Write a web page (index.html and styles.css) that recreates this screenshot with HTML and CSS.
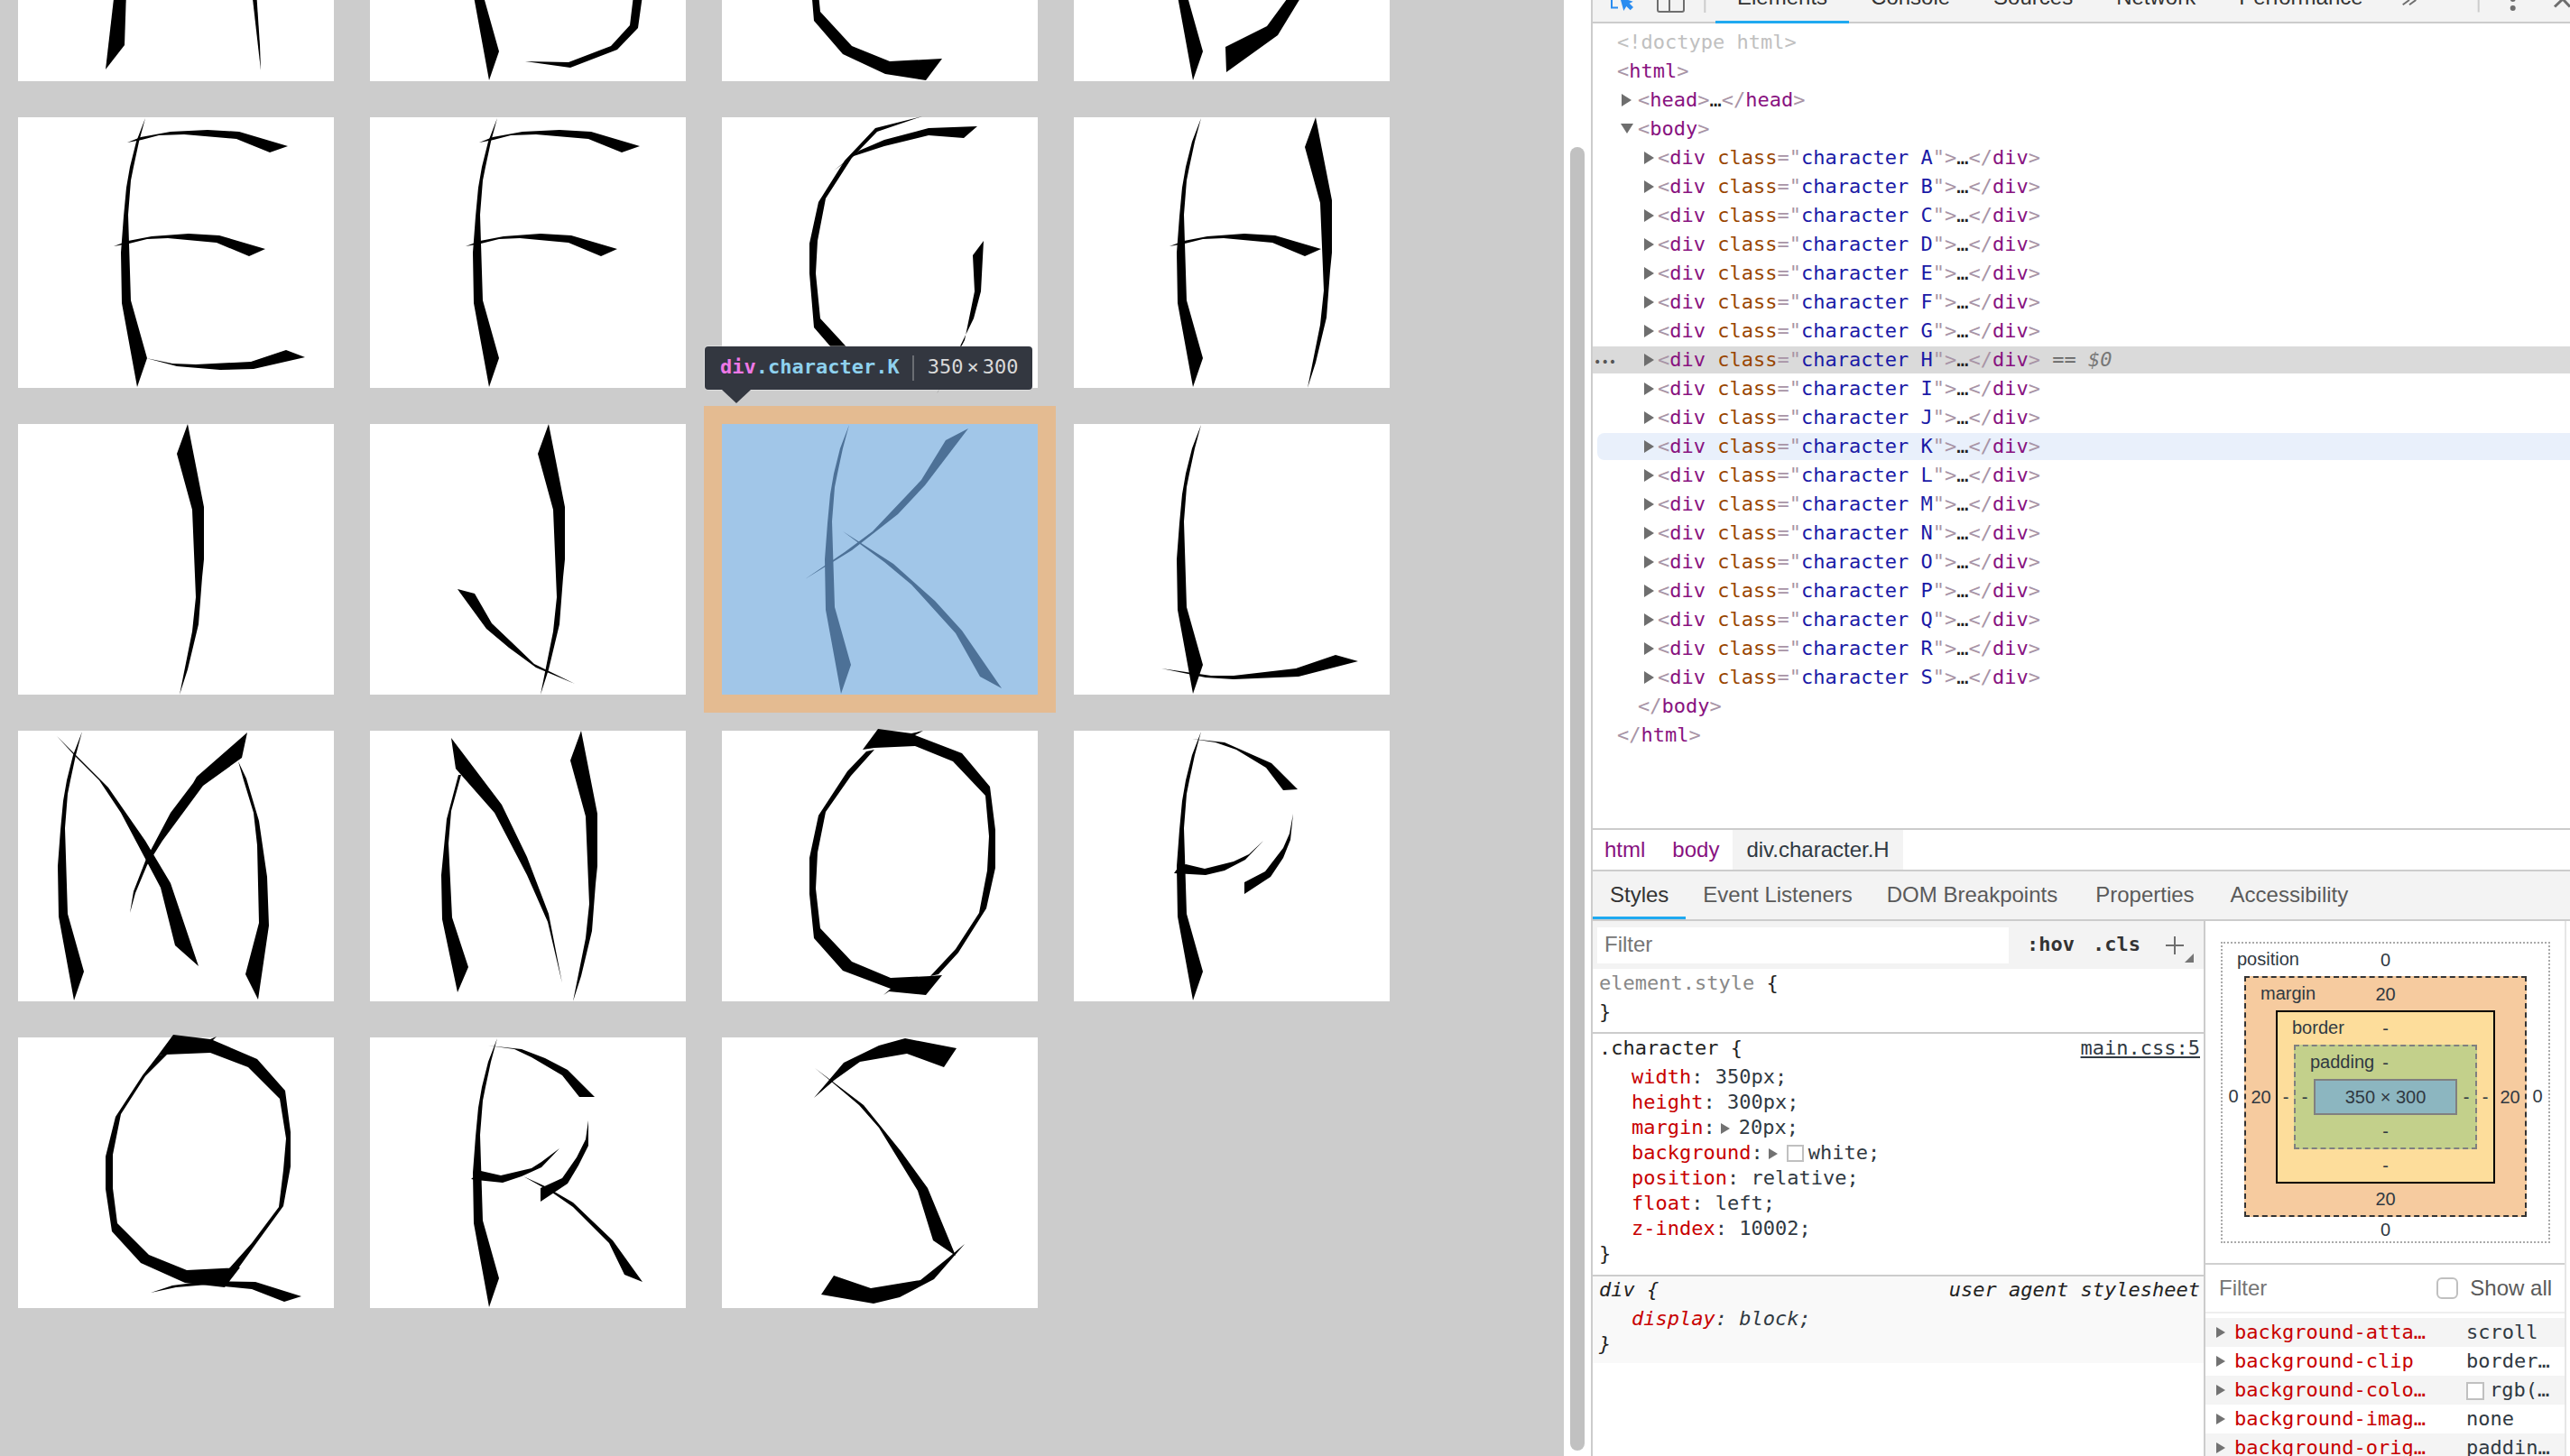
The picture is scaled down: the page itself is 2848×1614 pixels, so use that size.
FILE: index.html
```html
<!DOCTYPE html>
<html lang="en">
<head>
    <meta charset="UTF-8">
    <title>Characters</title>
    <link rel="stylesheet" href="styles.css">
</head>
<body>
    <!-- strokes that several letters share -->
    <svg class="defs">
        <defs>
            <polygon id="stem" points="141,1 134,27 128,55 125,70 122,108 125,203 143,267 132,299 115,206 114,150 117,110 120,78 124,55 131,27"/>
            <polygon id="tall" points="188,0 176,33 193,95 197,192 193,230 185,270 179,300 188,272 200,222 204,170 206,150 206,92"/>
            <polygon id="bar-top" points="121,28 136,22 169,16 210,14 245,16 299,32 279,39 242,24 184,19 156,20 137,25"/>
            <polygon id="bar-mid" points="106,143 122,137 148,132 189,129 223,131 274,146 256,154 220,139 166,134 143,135 123,140"/>
            <polygon id="curve" points="222,-1 170,12 136,48 107,94 97,140 97,173 102,233 134,270 181,292 226,299 244,275 186,278 144,261 109,223 104,173 106,137 115,90 144,45 172,16"/>
        </defs>
    </svg>

    <div class="page">
        <div class="sheet">
            <div class="character A"><svg class="glyph" viewBox="0 0 350 300">
                <polygon points="107,200 97,287 118,260 120,200"/>
                <polygon points="259,200 269,288 268,260 264,200"/>
            </svg></div>
            <div class="character B"><svg class="glyph" viewBox="0 0 350 300">
                <use href="#stem"/>
                <polygon points="172,278 220,279 267,261 288,238 292,205 302,205 297,241 274,265 222,285"/>
            </svg></div>
            <div class="character C"><svg class="glyph" viewBox="0 0 350 300">
                <use href="#curve"/>
            </svg></div>
            <div class="character D"><svg class="glyph" viewBox="0 0 350 300">
                <use href="#stem"/>
                <polygon points="168,262 214,239 250,190 262,190 226,249 169,290"/>
            </svg></div>

            <div class="character E"><svg class="glyph" viewBox="0 0 350 300">
                <use href="#stem"/>
                <use href="#bar-top"/>
                <use href="#bar-mid"/>
                <polygon points="142,267 171,273 197,274 258,271 297,258 318,266 261,279 224,280 176,276"/>
            </svg></div>
            <div class="character F"><svg class="glyph" viewBox="0 0 350 300">
                <use href="#stem"/>
                <use href="#bar-top"/>
                <use href="#bar-mid"/>
            </svg></div>
            <div class="character G"><svg class="glyph" viewBox="0 0 350 300">
                <use href="#curve"/>
                <polygon points="124,59 152,37 180,25 229,12 283,10 268,23 229,20 180,32 146,43"/>
                <polygon points="290,137 278,153 280,193 269,247 238,307 279,223 287,193"/>
            </svg></div>
            <div class="character H"><svg class="glyph" viewBox="0 0 350 300">
                <use href="#stem"/>
                <use href="#tall" x="80"/>
                <use href="#bar-mid"/>
            </svg></div>

            <div class="character I"><svg class="glyph" viewBox="0 0 350 300">
                <use href="#tall"/>
            </svg></div>
            <div class="character J"><svg class="glyph" viewBox="0 0 350 300">
                <use href="#tall" x="10"/>
                <polygon points="97,183 116,188 135,221 156,241 182,266 227,288 184,270 154,248 129,227"/>
            </svg></div>
            <div class="character K"><svg class="glyph" viewBox="0 0 350 300">
                <use href="#stem"/>
                <polygon points="92,172 144,140 195,100 225,68 273,5 248,18 221,62 167,119 136,142"/>
                <polygon points="134,119 190,155 236,196 266,229 310,293 286,280 259,232 210,178 180,153"/>
            </svg></div>
            <div class="character L"><svg class="glyph" viewBox="0 0 350 300">
                <use href="#stem"/>
                <polygon points="97,271 152,279 177,279 246,271 290,256 315,263 249,280 177,283 146,281"/>
            </svg></div>

            <div class="character M"><svg class="glyph" viewBox="0 0 350 300">
                <use href="#stem" x="-70"/>
                <polygon points="43,6 100,63 141,122 169,169 200,261 174,238 158,174 114,91 90,55 64,29"/>
                <polygon points="254,2 248,30 205,61 160,122 143,149 130,180 124,202 128,178 142,142 169,91 194,58 198,51"/>
                <polygon points="244,34 253,53 267,100 276,162 278,216 266,298 252,270 267,213 265,127 261,91 250,55"/>
            </svg></div>
            <div class="character N"><svg class="glyph" viewBox="0 0 350 300">
                <polygon points="101,49 90,89 87,125 91,207 109,262 97,290 80,209 79,160 85,98 98,49"/>
                <polygon points="90,8 146,82 174,140 198,203 213,280 197,212 174,160 138,91 95,42"/>
                <use href="#tall" x="46"/>
            </svg></div>
            <div class="character O"><svg class="glyph" viewBox="0 0 350 300">
                <polygon points="173,-2 210,3 223,0 214,5 266,25 297,62 303,110 303,152 293,197 262,246 240,270 231,272 259,242 285,202 294,155 296,117 292,72 256,34 214,17 169,19 156,21"/>
                <polygon points="226,293 185,289 179,293 187,286 134,266 102,230 97,181 97,141 107,94 139,45 160,23 169,21 143,50 115,90 106,135 104,175 109,219 144,256 187,274 231,272 244,271"/>
            </svg></div>
            <div class="character P"><svg class="glyph" viewBox="0 0 350 300">
                <use href="#stem"/>
                <polygon points="131,9 167,13 219,36 248,65 232,66 213,41 180,21 157,13"/>
                <polygon points="111,158 116,151 124,148 145,153 177,145 194,137 210,122 190,143 167,155 146,160"/>
                <polygon points="243,92 240,121 232,141 218,162 189,181 189,168 212,156 232,130 239,114"/>
            </svg></div>

            <div class="character Q"><svg class="glyph" viewBox="0 0 350 300">
                <polygon points="172,-3 213,2 220,-1 216,3 265,24 296,59 302,105 302,143 294,187 262,231 244,256 233,257 259,228 289,188 294,147 297,112 290,68 255,33 213,17 164,19 155,20"/>
                <polygon points="246,255 187,258 145,241 110,206 105,167 105,130 114,85 141,43 166,18 155,20 138,42 108,88 97,132 97,168 104,215 136,250 185,272 229,277"/>
                <polygon points="147,283 171,275 210,270 263,271 314,287 295,293 259,279 210,274 175,277"/>
            </svg></div>
            <div class="character R"><svg class="glyph" viewBox="0 0 350 300">
                <use href="#stem"/>
                <polygon points="131,9 168,13 194,23 219,36 249,66 232,66 213,42 179,22 160,13"/>
                <polygon points="112,157 123,148 145,153 179,145 190,138 210,123 190,144 168,154 147,161 118,158"/>
                <polygon points="242,92 242,120 231,142 219,162 189,182 189,167 213,156 229,133 239,113"/>
                <polygon points="170,154 194,165 225,183 269,225 302,271 282,263 265,228 225,188 202,172"/>
            </svg></div>
            <div class="character S"><svg class="glyph" viewBox="0 0 350 300">
                <polygon points="102,67 135,28 174,9 203,1 260,12 246,33 205,18 153,27 125,47"/>
                <polygon points="103,34 157,75 199,127 228,167 259,242 234,225 217,170 174,100 152,75 119,47"/>
                <polygon points="269,229 235,268 197,288 168,295 110,285 124,264 165,278 220,269 250,245"/>
            </svg></div>
        </div>

        <div class="tooltip">
            <span class="tip-tag">div</span><span class="tip-class">.character.K</span>
            <span class="tip-sep"></span>
            <span class="tip-size">350<i>×</i>300</span>
        </div>
    </div>

    <div class="page-scroll"><div class="page-thumb"></div></div>

    <div class="devtools">
        <div class="toolbar">
            <svg class="tool-icons" viewBox="0 0 136 26">
                <path class="ico-blue" d="M21 0v8.5h7"/>
                <path class="ico-blue-fill" d="M31 0l3.3 12 3-5 4.4 4.3 3.3-3.3-4.3-4.3 4-2L39.3 0z"/>
                <path class="ico-gray" d="M72 0v11a2 2 0 0 0 2 2h25a2 2 0 0 0 2-2V0M85 0v13"/>
                <path class="ico-sep" d="M124.3 0v14"/>
            </svg>
            <div class="tool-tab tool-active">Elements</div>
            <div class="tool-tab">Console</div>
            <div class="tool-tab">Sources</div>
            <div class="tool-tab">Network</div>
            <div class="tool-tab">Performance</div>
            <svg class="tool-end" viewBox="0 0 198 26">
                <path class="ico-gray" d="M12.7 5.3L20 0M20 5.3L27.3 0"/>
                <path class="ico-sep" d="M96.7 0v13.5"/>
                <circle class="ico-dot" cx="134.7" cy="-1" r="3"/>
                <circle class="ico-dot" cx="134.7" cy="9" r="3"/>
                <path class="ico-gray ico-thick" d="M181 7.5L190 -1L198 7.5"/>
            </svg>
        </div>

        <div class="tree">
            <div class="row lvl0 doctype">&lt;!doctype html&gt;</div>
            <div class="row lvl0"><b>&lt;</b><em>html</em><b>&gt;</b></div>
            <div class="row lvl1 closed"><b>&lt;</b><em>head</em><b>&gt;</b>…<b>&lt;/</b><em>head</em><b>&gt;</b></div>
            <div class="row lvl1 open"><b>&lt;</b><em>body</em><b>&gt;</b></div>
            <div class="row lvl2 closed"><b>&lt;</b><em>div</em> <u>class</u><b>="</b><s>character A</s><b>"&gt;</b>…<b>&lt;/</b><em>div</em><b>&gt;</b></div>
            <div class="row lvl2 closed"><b>&lt;</b><em>div</em> <u>class</u><b>="</b><s>character B</s><b>"&gt;</b>…<b>&lt;/</b><em>div</em><b>&gt;</b></div>
            <div class="row lvl2 closed"><b>&lt;</b><em>div</em> <u>class</u><b>="</b><s>character C</s><b>"&gt;</b>…<b>&lt;/</b><em>div</em><b>&gt;</b></div>
            <div class="row lvl2 closed"><b>&lt;</b><em>div</em> <u>class</u><b>="</b><s>character D</s><b>"&gt;</b>…<b>&lt;/</b><em>div</em><b>&gt;</b></div>
            <div class="row lvl2 closed"><b>&lt;</b><em>div</em> <u>class</u><b>="</b><s>character E</s><b>"&gt;</b>…<b>&lt;/</b><em>div</em><b>&gt;</b></div>
            <div class="row lvl2 closed"><b>&lt;</b><em>div</em> <u>class</u><b>="</b><s>character F</s><b>"&gt;</b>…<b>&lt;/</b><em>div</em><b>&gt;</b></div>
            <div class="row lvl2 closed"><b>&lt;</b><em>div</em> <u>class</u><b>="</b><s>character G</s><b>"&gt;</b>…<b>&lt;/</b><em>div</em><b>&gt;</b></div>
            <div class="row lvl2 closed selected"><span class="row-dots">•••</span><b>&lt;</b><em>div</em> <u>class</u><b>="</b><s>character H</s><b>"&gt;</b>…<b>&lt;/</b><em>div</em><b>&gt;</b><span class="row-eq"> == <i>$0</i></span></div>
            <div class="row lvl2 closed"><b>&lt;</b><em>div</em> <u>class</u><b>="</b><s>character I</s><b>"&gt;</b>…<b>&lt;/</b><em>div</em><b>&gt;</b></div>
            <div class="row lvl2 closed"><b>&lt;</b><em>div</em> <u>class</u><b>="</b><s>character J</s><b>"&gt;</b>…<b>&lt;/</b><em>div</em><b>&gt;</b></div>
            <div class="row lvl2 closed hovered"><b>&lt;</b><em>div</em> <u>class</u><b>="</b><s>character K</s><b>"&gt;</b>…<b>&lt;/</b><em>div</em><b>&gt;</b></div>
            <div class="row lvl2 closed"><b>&lt;</b><em>div</em> <u>class</u><b>="</b><s>character L</s><b>"&gt;</b>…<b>&lt;/</b><em>div</em><b>&gt;</b></div>
            <div class="row lvl2 closed"><b>&lt;</b><em>div</em> <u>class</u><b>="</b><s>character M</s><b>"&gt;</b>…<b>&lt;/</b><em>div</em><b>&gt;</b></div>
            <div class="row lvl2 closed"><b>&lt;</b><em>div</em> <u>class</u><b>="</b><s>character N</s><b>"&gt;</b>…<b>&lt;/</b><em>div</em><b>&gt;</b></div>
            <div class="row lvl2 closed"><b>&lt;</b><em>div</em> <u>class</u><b>="</b><s>character O</s><b>"&gt;</b>…<b>&lt;/</b><em>div</em><b>&gt;</b></div>
            <div class="row lvl2 closed"><b>&lt;</b><em>div</em> <u>class</u><b>="</b><s>character P</s><b>"&gt;</b>…<b>&lt;/</b><em>div</em><b>&gt;</b></div>
            <div class="row lvl2 closed"><b>&lt;</b><em>div</em> <u>class</u><b>="</b><s>character Q</s><b>"&gt;</b>…<b>&lt;/</b><em>div</em><b>&gt;</b></div>
            <div class="row lvl2 closed"><b>&lt;</b><em>div</em> <u>class</u><b>="</b><s>character R</s><b>"&gt;</b>…<b>&lt;/</b><em>div</em><b>&gt;</b></div>
            <div class="row lvl2 closed"><b>&lt;</b><em>div</em> <u>class</u><b>="</b><s>character S</s><b>"&gt;</b>…<b>&lt;/</b><em>div</em><b>&gt;</b></div>
            <div class="row lvl1"><b>&lt;/</b><em>body</em><b>&gt;</b></div>
            <div class="row lvl0"><b>&lt;/</b><em>html</em><b>&gt;</b></div>
        </div>

        <div class="crumbs">
            <span class="crumb">html</span>
            <span class="crumb">body</span>
            <span class="crumb crumb-on">div.character.H</span>
        </div>

        <div class="side-tabs">
            <div class="side-tab side-tab-on">Styles</div>
            <div class="side-tab">Event Listeners</div>
            <div class="side-tab">DOM Breakpoints</div>
            <div class="side-tab">Properties</div>
            <div class="side-tab">Accessibility</div>
        </div>

        <div class="lower">
            <div class="styles">
                <div class="filter-bar">
                    <div class="filter-input">Filter</div>
                    <span class="filter-btn hov">:hov</span>
                    <span class="filter-btn cls">.cls</span>
                    <span class="filter-plus"></span>
                    <span class="filter-corner"></span>
                </div>

                <div class="rule rule-first">
                    <div class="sel-line"><span class="sel-dim">element.style</span> {</div>
                    <div>}</div>
                </div>

                <div class="rule">
                    <div class="sel-line"><span>.character {</span><span class="source">main.css:5</span></div>
                    <div class="prop"><span>width</span>: 350px;</div>
                    <div class="prop"><span>height</span>: 300px;</div>
                    <div class="prop"><span>margin</span>:<i class="mini-arrow"></i>20px;</div>
                    <div class="prop"><span>background</span>:<i class="mini-arrow"></i><i class="swatch"></i>white;</div>
                    <div class="prop"><span>position</span>: relative;</div>
                    <div class="prop"><span>float</span>: left;</div>
                    <div class="prop"><span>z-index</span>: 10002;</div>
                    <div>}</div>
                </div>

                <div class="rule rule-agent">
                    <div class="sel-line"><span>div {</span><span>user agent stylesheet</span></div>
                    <div class="prop"><span>display</span>: block;</div>
                    <div>}</div>
                </div>
            </div>

            <div class="computed">
                <div class="metrics">
                    <div class="box box-position">
                        <div class="box-top"><span class="box-label">position</span>0</div>
                        <div class="box-side">0</div>
                        <div class="box box-margin">
                            <div class="box-top"><span class="box-label">margin</span>20</div>
                            <div class="box-side">20</div>
                            <div class="box box-border">
                                <div class="box-top"><span class="box-label">border</span>-</div>
                                <div class="box-side">-</div>
                                <div class="box box-padding">
                                    <div class="box-top"><span class="box-label">padding</span>-</div>
                                    <div class="box-side">-</div>
                                    <div class="box-content">350 × 300</div>
                                    <div class="box-side">-</div>
                                    <div class="box-bottom">-</div>
                                </div>
                                <div class="box-side">-</div>
                                <div class="box-bottom">-</div>
                            </div>
                            <div class="box-side">20</div>
                            <div class="box-bottom">20</div>
                        </div>
                        <div class="box-side">0</div>
                        <div class="box-bottom">0</div>
                    </div>
                </div>

                <div class="computed-filter">
                    <span class="computed-filter-label">Filter</span>
                    <span class="checkbox"></span>
                    <span class="show-all">Show all</span>
                </div>

                <div class="computed-list">
                    <div class="cp-row"><span class="cp-name">background-atta…</span><span>scroll</span></div>
                    <div class="cp-row"><span class="cp-name">background-clip</span><span>border…</span></div>
                    <div class="cp-row"><span class="cp-name">background-colo…</span><span><i class="swatch cp-swatch"></i>rgb(…</span></div>
                    <div class="cp-row"><span class="cp-name">background-imag…</span><span>none</span></div>
                    <div class="cp-row"><span class="cp-name">background-orig…</span><span>paddin…</span></div>
                </div>
            </div>
        </div>
    </div>
</body>
</html>
```

FILE: styles.css
```css
html, body {
    margin: 0;
    height: 100%;
}

body {
    display: flex;
    height: 100vh;
    overflow: hidden;
    background: #fff;
    font-family: "Liberation Sans", Arial, sans-serif;
}

.defs {
    position: absolute;
    width: 0;
    height: 0;
}

/* the inspected page */
.page {
    position: relative;
    flex: none;
    width: 1733px;
    height: 100%;
    background: #ccc;
    overflow: hidden;
}

.sheet {
    display: flex;
    flex-wrap: wrap;
    align-content: flex-start;
    width: 1560px;
    margin-top: -230px;
}

.character {
    flex: none;
    width: 350px;
    height: 300px;
    margin: 20px;
    background: #fff;
}

.glyph {
    display: block;
    width: 350px;
    height: 300px;
    overflow: visible;
    fill: #000;
}

.character.K {
    background: #a1c6e8;
    box-shadow: 0 0 0 20px #e4bb91;
}

.character.K .glyph {
    fill: #4d7197;
}

.tooltip {
    position: absolute;
    left: 781px;
    top: 384px;
    box-sizing: border-box;
    display: flex;
    align-items: center;
    width: 363px;
    height: 48px;
    padding: 0 0 3px 17px;
    background: #333740;
    border-radius: 4px;
    box-shadow: 0 0 0 1px rgba(255, 255, 255, 0.35);
    font-family: "DejaVu Sans Mono", monospace;
    font-size: 22px;
    font-weight: bold;
    white-space: nowrap;
}

.tooltip::after {
    content: "";
    position: absolute;
    left: 19px;
    top: 48px;
    border-left: 16px solid transparent;
    border-right: 16px solid transparent;
    border-top: 15px solid #333740;
}

.tip-tag {
    color: #ee78e6;
}

.tip-class {
    color: #8ed1ee;
}

.tip-sep {
    width: 2px;
    height: 28px;
    margin: 3px 15px 0 14px;
    background: #6a6d73;
}

.tip-size {
    color: #d9d9d9;
    font-weight: normal;
}

.tip-size i {
    margin: 0 4px;
    font-style: normal;
}

.page-scroll {
    flex: none;
    box-sizing: border-box;
    width: 30px;
    padding: 163px 7px 6px;
    background: #fff;
}

.page-thumb {
    width: 16px;
    height: 100%;
    background: #c1c1c1;
    border-radius: 8px;
}

/* devtools */
.devtools {
    flex: 1;
    display: flex;
    flex-direction: column;
    min-width: 0;
    border-left: 2px solid #ccc;
}

.toolbar {
    flex: none;
    display: flex;
    align-items: flex-end;
    height: 26px;
    background: #f3f3f3;
    box-shadow: inset 0 -2px #ccc;
    overflow: hidden;
}

.tool-icons {
    flex: none;
    width: 136px;
    height: 26px;
    fill: none;
}

.ico-blue {
    stroke: #2a8cf0;
    stroke-width: 2;
}

.ico-blue-fill {
    fill: #2a8cf0;
}

.ico-gray {
    stroke: #6e6e6e;
    stroke-width: 2;
}

.ico-thick {
    stroke-width: 3;
}

.ico-sep {
    stroke: #ccc;
    stroke-width: 2;
}

.ico-dot {
    fill: #6e6e6e;
}

.tool-tab {
    flex: none;
    box-sizing: border-box;
    height: 54px;
    padding: 0 24px;
    border-bottom: 3px solid transparent;
    color: #333;
    font-size: 24px;
    line-height: 50px;
}

.tool-active {
    border-bottom-color: #1fa9f0;
}

.tool-end {
    flex: none;
    width: 198px;
    height: 26px;
    margin-left: auto;
    fill: none;
}

.tree {
    flex: none;
    box-sizing: border-box;
    height: 894px;
    padding-top: 6px;
    border-bottom: 2px solid #ccc;
    color: #222;
    font-family: "DejaVu Sans Mono", monospace;
    font-size: 22px;
}

.row {
    position: relative;
    height: 30px;
    margin-bottom: 2px;
    line-height: 30px;
    white-space: pre;
}

.row b {
    color: #a894a6;
    font-weight: normal;
}

.row em {
    color: #881280;
    font-style: normal;
}

.row u {
    color: #994500;
    text-decoration: none;
}

.row s {
    color: #1a1aa6;
    text-decoration: none;
}

.lvl0 {
    padding-left: 27px;
}

.lvl1 {
    padding-left: 50px;
}

.lvl2 {
    padding-left: 72px;
}

.doctype {
    color: #c0c0c0;
}

.closed::before,
.open::before {
    content: "";
    display: inline-block;
    vertical-align: 0;
}

.closed::before {
    margin: 0 4px 0 -15px;
    border-top: 7px solid transparent;
    border-bottom: 7px solid transparent;
    border-left: 11px solid #6e6e6e;
}

.lvl1.closed::before {
    margin: 0 7px 0 -18px;
}

.open::before {
    margin: 0 5px 2px -19px;
    border-left: 7px solid transparent;
    border-right: 7px solid transparent;
    border-top: 11px solid #6e6e6e;
}

.selected {
    background: #dadada;
}

.hovered {
    margin-left: 5px;
    padding-left: 67px;
    background: #e9f0fb;
    border-radius: 8px 0 0 8px;
}

.row-dots {
    position: absolute;
    left: 1px;
    top: 2px;
    color: #555;
    font-size: 14px;
}

.row-eq {
    color: #666;
}

.row-eq i {
    color: #777;
}

.crumbs {
    flex: none;
    display: flex;
    box-sizing: border-box;
    height: 46px;
    padding-left: 13px;
    border-bottom: 2px solid #ccc;
    font-size: 24px;
    line-height: 44px;
}

.crumb {
    padding-right: 30px;
    color: #881280;
}

.crumb-on {
    margin-left: -15px;
    padding: 0 15px;
    background: #f3f3f3;
    color: #303942;
}

.side-tabs {
    flex: none;
    display: flex;
    box-sizing: border-box;
    height: 55px;
    border-bottom: 2px solid #ccc;
    background: #f3f3f3;
}

.side-tab {
    padding: 0 19px;
    color: #5a5a5a;
    font-size: 24px;
    line-height: 52px;
}

.side-tab:nth-child(4) {
    margin-left: 4px;
}

.side-tab:nth-child(5) {
    margin-left: 2px;
}

.side-tab-on {
    color: #333;
    height: 53px;
    box-sizing: border-box;
    border-bottom: 3px solid #1fa9f0;
}

.lower {
    flex: 1;
    display: flex;
    min-height: 0;
}

.styles {
    flex: none;
    box-sizing: border-box;
    width: 679px;
    border-right: 2px solid #ccc;
    color: #222;
    font-family: "DejaVu Sans Mono", monospace;
    font-size: 22px;
    line-height: 28px;
}

.filter-bar {
    position: relative;
    display: flex;
    align-items: center;
    height: 53px;
    background: #f3f3f3;
}

.filter-input {
    box-sizing: border-box;
    width: 456px;
    height: 40px;
    margin-left: 5px;
    padding-left: 8px;
    background: #fff;
    color: #757575;
    font-family: "Liberation Sans", Arial, sans-serif;
    font-size: 24px;
    line-height: 38px;
}

.filter-btn {
    margin-top: -2px;
    color: #333;
    font-weight: bold;
}

.hov {
    margin-left: 20px;
}

.cls {
    margin-left: 20px;
}

.filter-plus {
    position: relative;
    width: 20px;
    height: 20px;
    margin-left: 28px;
    background: linear-gradient(#6e6e6e, #6e6e6e) center / 20px 2px no-repeat,
                linear-gradient(#6e6e6e, #6e6e6e) center / 2px 20px no-repeat;
}

.filter-corner {
    position: absolute;
    right: 11px;
    bottom: 7px;
    border-left: 10px solid transparent;
    border-bottom: 10px solid #757575;
}

.rule {
    padding: 2px 4px 9px 7px;
    border-bottom: 2px solid #ccc;
}

.rule-first {
    padding-bottom: 8px;
}

.sel-line {
    display: flex;
    justify-content: space-between;
    margin-bottom: 4px;
}

.rule-first .sel-line {
    display: block;
}

.sel-dim {
    color: #888;
}

.source {
    color: #303942;
    text-decoration: underline;
}

.prop {
    padding-left: 36px;
    color: #303942;
}

.prop span {
    color: #c80000;
}

.mini-arrow {
    display: inline-block;
    margin: 0 10px 0 6px;
    border-top: 6px solid transparent;
    border-bottom: 6px solid transparent;
    border-left: 10px solid #727272;
}

.swatch {
    display: inline-block;
    box-sizing: border-box;
    width: 19px;
    height: 19px;
    margin-right: 5px;
    border: 2px solid #c0c0c0;
    background: #fff;
    vertical-align: -3px;
}

.rule-agent {
    padding: 1px 4px 7px 7px;
    border-bottom: none;
    background: #f9f9f9;
    font-style: italic;
}

.computed {
    flex: 1;
    min-width: 0;
    margin-right: 4px;
    border-right: 2px solid #e6e6e6;
    overflow: hidden;
}

.metrics {
    box-sizing: border-box;
    height: 381px;
    padding: 23px 0 0 17px;
    border-bottom: 2px solid #d0d0d0;
    color: #303942;
    font-size: 20px;
    text-align: center;
}

.box {
    display: grid;
    box-sizing: border-box;
}

.box-position {
    grid-template-columns: 24px 1fr 24px;
    grid-template-rows: 36px 1fr 28px;
    width: 365px;
    height: 334px;
    border: 2px dotted #aaa;
}

.box-margin {
    grid-template-columns: 33px 1fr 33px;
    grid-template-rows: 36px 1fr 35px;
    border: 2px dashed #333;
    background: #f6cb9f;
}

.box-border {
    grid-template-columns: 18px 1fr 18px;
    grid-template-rows: 36px 1fr 36px;
    border: 2px solid #000;
    background: #fddd9b;
}

.box-padding {
    grid-template-columns: 20px 1fr 20px;
    grid-template-rows: 36px 1fr 36px;
    border: 2px dashed #808080;
    background: #c3d08b;
}

.box-top,
.box-bottom {
    position: relative;
    grid-column: 1 / 4;
    align-self: center;
}

.box-side {
    align-self: center;
}

.box-label {
    position: absolute;
    left: 16px;
    top: -1px;
}

.box-content {
    box-sizing: border-box;
    height: 40px;
    border: 2px solid #808080;
    background: #8cb6c0;
    line-height: 36px;
    white-space: nowrap;
}

.computed-filter {
    display: flex;
    align-items: center;
    height: 52px;
    padding-left: 15px;
    border-bottom: 2px solid #eee;
    font-size: 24px;
}

.computed-filter-label {
    color: #757575;
}

.checkbox {
    box-sizing: border-box;
    width: 24px;
    height: 24px;
    margin-left: 188px;
    border: 2px solid #c0c0c0;
    border-radius: 6px;
    background: #fff;
}

.show-all {
    margin-left: 13px;
    color: #5a5a5a;
}

.computed-list {
    padding-top: 5px;
    color: #303942;
    font-family: "DejaVu Sans Mono", monospace;
    font-size: 22px;
}

.cp-row {
    position: relative;
    display: flex;
    height: 32px;
    padding-left: 32px;
    line-height: 32px;
}

.cp-row:nth-child(odd) {
    background: #f4f4f4;
}

.cp-row::before {
    content: "";
    position: absolute;
    left: 12px;
    top: 10px;
    border-top: 6px solid transparent;
    border-bottom: 6px solid transparent;
    border-left: 10px solid #727272;
}

.cp-name {
    flex: none;
    width: 257px;
    color: #c80000;
}

.cp-swatch {
    width: 20px;
    height: 20px;
    margin-right: 6px;
    vertical-align: -4px;
}
```
